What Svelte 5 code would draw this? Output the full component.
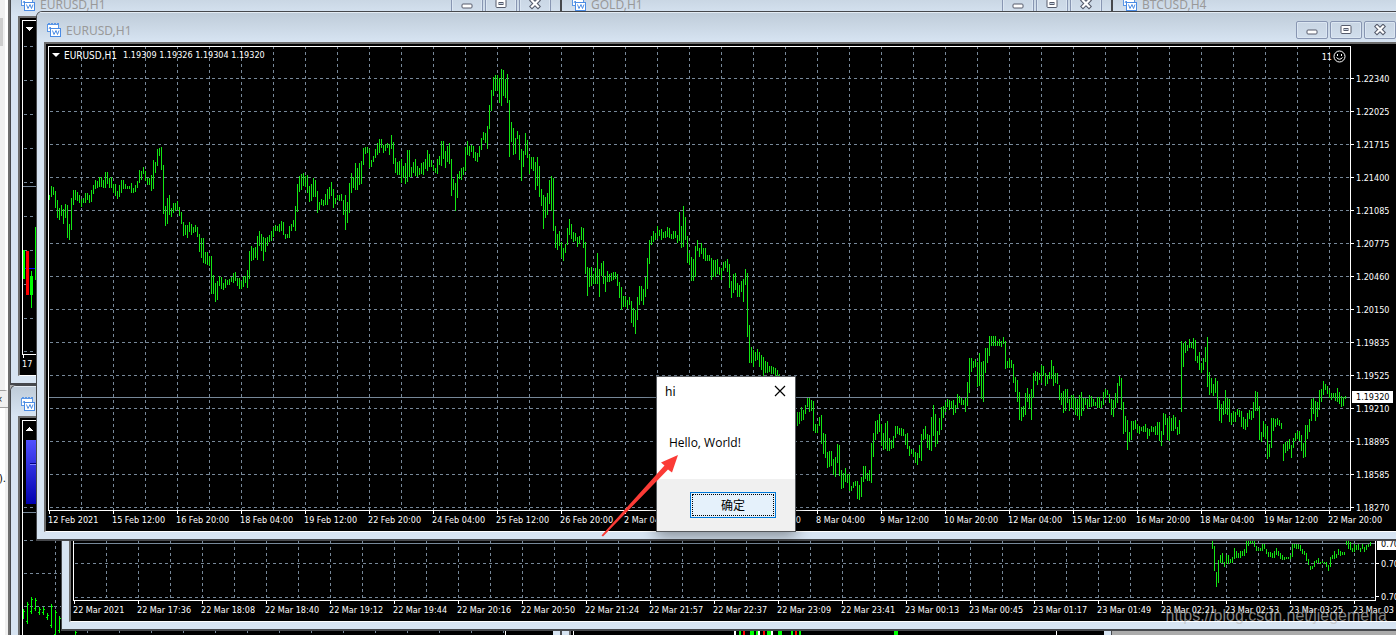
<script lang="ts">
  type Bar = [number, number];

  // high-low pairs, one bar every 2px, measured down from the desktop's top
  const eurusd = `
    195-200 186-197 187-195 191-208 200-218 208-220 205-216 209-224 204-218 205-238 224-240 198-230 190-205 190-200 192-201 195-203
    199-207 198-203 193-203 193-200 195-203 190-202 185-194 180-189 181-188 177-187 177-187 180-188 172-188 172-184 178-188 177-188
    184-193 184-196 191-199 185-197 180-193 180-189 184-189 186-189 186-189 183-193 188-193 185-192 181-188 170-183 171-180 167-174
    171-181 178-185 178-185 175-191 160-189 162-173 149-166 148-156 147-170 165-214 206-226 198-224 195-215 208-217 203-213 203-211
    201-210 207-216 212-224 222-236 225-235 225-238 222-232 224-235 227-233 225-232 227-237 234-252 238-258 238-263 252-264 252-265
    256-266 256-294 275-294 283-302 281-300 276-286 277-289 283-290 279-288 280-285 279-285 277-282 273-283 272-281 278-286 278-289
    281-289 276-287 276-283 270-288 251-279 246-261 248-260 247-258 236-260 231-246 234-251 237-261 238-252 237-246 235-242 231-241
    227-237 225-231 226-231 224-232 221-231 222-235 234-239 234-238 226-238 224-231 220-227 206-231 184-212 176-192 174-190 173-186
    176-187 175-193 186-202 184-201 178-197 180-197 191-213 202-210 199-205 200-206 194-205 189-205 187-199 182-196 189-208 198-204
    195-200 195-201 194-201 200-215 195-230 202-223 183-213 173-193 177-188 163-190 168-190 163-185 161-184 148-165 147-154 147-153
    149-168 160-167 156-162 149-158 143-155 139-153 139-148 145-153 144-151 143-148 144-155 135-149 142-164 158-173 162-175 161-175
    159-183 166-178 163-184 150-182 150-177 167-177 162-173 159-176 166-177 168-175 163-174 162-175 159-169 150-171 154-167 160-167
    165-171 168-173 159-174 156-165 141-166 141-159 151-168 146-162 143-164 159-196 179-190 183-211 174-198 171-179 168-180 167-175
    147-171 141-155 146-156 145-152 146-158 152-161 153-162 146-157 138-150 132-140 133-143 126-149 105-129 90-111 77-96 75-91
    75-91 78-103 69-106 70-96 79-98 74-103 100-157 122-142 128-155 138-154 131-139 135-160 149-181 151-167 133-155 140-158
    155-174 157-169 157-171 162-190 157-186 166-197 189-206 195-229 197-218 193-215 180-204 176-211 178-231 226-248 234-250 231-246
    242-258 248-261 244-253 228-245 219-235 224-239 232-242 233-241 237-247 236-244 227-240 228-248 242-274 267-296 268-287 267-286
    274-284 268-284 253-284 269-297 263-276 261-284 276-292 271-282 274-282 273-281 272-280 272-279 274-286 282-298 287-310 296-307
    296-307 300-309 297-305 301-323 308-327 310-334 297-320 286-305 286-301 289-305 277-297 258-289 240-264 236-245 231-242 233-240
    226-239 230-236 229-240 232-238 231-238 227-237 228-238 234-239 231-239 231-238 235-243 212-241 226-248 206-247 217-240 236-263
    253-265 257-281 259-281 246-277 240-251 248-257 243-254 248-259 248-261 255-261 255-261 258-280 260-277 260-277 259-274 267-275
    268-280 262-271 261-268 259-272 264-288 281-298 274-293 273-290 283-297 285-297 281-292 279-302 269-285 273-337 325-363 347-363
    350-367 352-361 349-360 352-367 355-370 357-376 361-373 362-373 366-372 366-374 367-374 368-376 370-380 374-384 378-390 380-394
    384-398 388-402 392-408 398-412 404-418 410-426 412-426 412-424 407-421 410-420 405-414 398-407 398-412 400-411 401-431 424-433
    424-433 417-426 415-444 433-454 434-458 452-468 451-467 451-466 459-475 457-477 444-463 445-476 470-489 473-488 468-482 474-483
    474-491 486-491 482-488 481-486 481-499 485-500 477-497 466-482 466-479 473-481 470-481 443-483 433-457 421-440 420-434 414-432
    424-446 433-450 423-449 421-451 438-451 440-449 436-448 426-438 426-434 428-435 428-436 429-436 434-445 433-449 446-456 449-454
    450-457 452-463 453-465 445-458 434-461 429-440 426-439 434-448 435-450 417-451 405-436 414-447 431-444 418-435 407-430 406-418
    402-412 399-407 400-410 401-409 400-415 405-413 394-408 396-403 398-405 400-405 398-412 382-406 358-393 358-372 361-368 359-367
    362-387 353-386 362-399 361-402 348-373 348-363 336-356 336-346 336-346 336-346 341-346 339-346 341-347 337-344 341-369 361-368
    358-368 360-368 364-383 377-392 380-402 392-420 407-421 406-417 393-415 388-402 394-409 389-420 373-398 371-381 372-385 373-380
    365-383 366-376 373-386 375-384 372-379 360-379 366-386 373-383 373-384 385-400 393-405 391-413 389-411 389-403 399-411 395-408
    395-410 398-415 399-416 395-420 392-416 398-411 398-405 399-409 395-407 396-407 399-406 402-406 397-408 397-408 401-408 392-405
    389-398 390-395 394-403 399-415 400-417 393-408 383-403 376-386 378-410 402-434 416-432 420-450 432-442 421-440 421-430 420-429
    424-433 426-434 427-431 426-432 424-432 428-439 429-436 426-432 427-432 426-435 422-435 422-441 431-446 413-435 414-425 418-440
    416-441 418-431 415-431 417-429 427-435 420-434 341-412 343-367 341-353 345-351 339-348 342-348 338-349 340-361 356-363 352-370
    363-373 358-370 347-362 337-387 372-395 378-393 384-396 378-393 381-409 400-421 404-423 401-415 390-414 398-415 399-422 413-425
    411-422 412-422 409-415 410-417 411-427 417-429 419-430 413-427 410-419 411-420 402-418 391-411 392-411 406-440 432-442 421-437
    424-439 426-459 444-457 418-448 418-431 419-427 418-425 420-426 423-429 444-461 442-453 441-451 439-449 445-458 438-448 433-441
    431-439 431-441 435-451 443-458 425-457 425-439 419-432 399-421 398-414 401-421 402-417 390-410 389-402 381-395 384-390 386-394
    390-398 393-400 393-398 393-401 388-402 392-404 396-407 397-406 396-399`;

  const minute = `
    541-549 546-571 572-587 560-583 555-563 553-563 562-567 555-564 555-564 559-563 557-563 548-559 551-558 553-558 551-558 551-556
    549-556 541-553 541-546 541-544 541-543 541-547 546-551 548-551 548-551 544-551 544-549 549-554 552-557 552-557 553-558 551-558
    548-555 551-556 553-559 555-560 557-560 557-559 557-559 555-559 544-557 544-548 544-549 544-549 545-551 549-554 551-555 553-561
    559-565 566-570 566-569 561-567 560-563 558-563 562-564 561-563 562-564 562-567 565-571 557-567 555-559 551-559 554-558 549-555
    551-556 552-555 552-555 541-545 541-549 542-550 548-552 544-552 545-550 544-550 548-552 544-549 547-552 545-550 544-547 542-546`;

  const dailyBars = [
    [0, 609, 619], [4, 602, 624], [8, 597, 614], [12, 598, 611], [16, 607, 615], [20, 607, 615],
    [24, 613, 620], [28, 604, 628], [32, 610, 637], [36, 616, 633], [52, 630, 640]
  ];

  const prices = [
    '1.22340', '1.22025', '1.21715', '1.21400', '1.21085', '1.20775', '1.20460',
    '1.20150', '1.19835', '1.19525', '1.19210', '1.18895', '1.18585', '1.18270'
  ];

  const hours = [
    '12 Feb 2021', '15 Feb 12:00', '16 Feb 20:00', '18 Feb 04:00', '19 Feb 12:00', '22 Feb 20:00', '24 Feb 04:00',
    '25 Feb 12:00', '26 Feb 20:00', '2 Mar 04:00', '3 Mar 12:00', '4 Mar 20:00', '8 Mar 04:00', '9 Mar 12:00',
    '10 Mar 20:00', '12 Mar 04:00', '15 Mar 12:00', '16 Mar 20:00', '18 Mar 04:00', '19 Mar 12:00', '22 Mar 20:00'
  ];

  const minutes = [
    '22 Mar 2021', '22 Mar 17:36', '22 Mar 18:08', '22 Mar 18:40', '22 Mar 19:12', '22 Mar 19:44', '22 Mar 20:16',
    '22 Mar 20:50', '22 Mar 21:24', '22 Mar 21:57', '22 Mar 22:37', '22 Mar 23:09', '22 Mar 23:41', '23 Mar 00:13',
    '23 Mar 00:45', '23 Mar 01:17', '23 Mar 01:49', '23 Mar 02:21', '23 Mar 02:53', '23 Mar 03:25', '23 Mar 03'
  ];

  const strip = [
    [160, 'w'], [165, 'g'], [169, 'r'], [176, 'g'], [178, 'g'], [182, 'g'], [184, 'w'], [189, 'r'],
    [193, 'g'], [195, 'g'], [197, 'w'], [204, 'g'], [206, 'g'], [217, 'g'], [221, 'r'], [225, 'g'], [320, 'g'], [322, 'g']
  ];
  const stripColors: Record<string, string> = { w: '#ffffff', g: '#00ff00', r: '#ff0000' };

  function parse(text: string): Bar[] {
    return text.trim().split(/\s+/).map((pair) => pair.split('-').map(Number) as Bar);
  }

  function barPath(text: string, left: number, top: number) {
    return parse(text)
      .map(([high, low], i) => `M${left + i * 2 + 0.5} ${high - top}V${low - top}`)
      .join('');
  }

  function steps(from: number, step: number, count: number) {
    return Array.from({ length: count }, (_, i) => from + i * step);
  }

  let open = $state(true);
</script>

{#snippet titlebar(title: string)}
  <header class="titlebar">
    <svg class="chart-icon" width="14" height="14" viewBox="0 0 14 14">
      <rect x="0.5" y="1.5" width="11" height="7" fill="#fff" stroke="#5a96e6" />
      <path d="M0 1.5h12" stroke="#5a96e6" />
      <path d="M1 .5h2M4 .5h2M7 .5h2M10 .5h2" stroke="#5a96e6" />
      <path d="M2 6l1-2 1 1" fill="none" stroke="#5a96e6" />
      <rect x="3.5" y="5.5" width="10" height="8" fill="#fff" stroke="#4a8be4" />
      <path d="M3 5.5h11" stroke="#4a8be4" stroke-width="1" />
      <path d="M5.5 7.5l1.500 4 2-4 1.500 4 1.500-4" fill="none" stroke="#4a8be4" />
    </svg>
    <span class="title">{title}</span>
    <div class="controls">
      <button aria-label="Minimize">
        <svg width="12" height="12"><rect x="1" y="6" width="10" height="4" rx="1" fill="#fff" stroke="#565b6b" /></svg>
      </button>
      <button aria-label="Maximize">
        <svg width="12" height="12">
          <rect x="1" y="1.5" width="10" height="8" rx="1" fill="#fff" stroke="#565b6b" />
          <rect x="4" y="4.5" width="4" height="2" fill="#c3d0e0" stroke="#565b6b" />
        </svg>
      </button>
      <button aria-label="Close">
        <svg width="12" height="12">
          <path d="M3 2.5l6 6M9 2.5l-6 6" stroke="#565b6b" stroke-width="4.4" stroke-linecap="square" />
          <path d="M3 2.5l6 6M9 2.5l-6 6" stroke="#fff" stroke-width="2.2" stroke-linecap="square" />
        </svg>
      </button>
    </div>
  </header>
{/snippet}

{#snippet grid(rows: number[], columns: number, level: number)}
  <g class="grid">
    {#each rows as y}
      <line x1="1" x2="100%" y1={y + 0.5} y2={y + 0.5} />
    {/each}
    {#each steps(32, 32, columns) as x}
      <line x1={x + 0.5} x2={x + 0.5} y1="-1" y2="100%" />
    {/each}
  </g>
  <line class="level" x1="0" x2="100%" y1={level + 0.5} y2={level + 0.5} />
{/snippet}

<main class="desktop">
  <aside class="dock">
    <div class="dock-top"><span class="thumb"></span></div>
    <div class="dock-head">×</div>
    <div class="dock-list">).</div>
  </aside>

  <section class="window back-first">
    {@render titlebar('EURUSD,H1')}
    <div class="chart">
      <div class="plot">
        <svg class="canvas">
          {@render grid([25, 59, 93, 127, 161, 195, 229, 263, 297, 330], 0, 165)}
          <path d="M3 6h7l-3.5 4z" fill="#fff" />
          <path d="M2 247h12" stroke="#0000ff" />
          <path d="M1 229v29M12.5 206v53" stroke="#00ff00" stroke-width="2" />
          <rect x="3" y="230" width="3" height="44" fill="#ff0000" />
          <rect x="7" y="255" width="3" height="19" fill="#00ff00" />
          <path d="M8.5 250v37" stroke="#00ff00" />
        </svg>
      </div>
      <div class="prices"></div>
      <div class="times"><span>17</span></div>
    </div>
  </section>

  <section class="window back-second">{@render titlebar('GOLD,H1')}</section>
  <section class="window back-third">{@render titlebar('BTCUSD,H4')}</section>

  <section class="window low-first">
    {@render titlebar('')}
    <div class="chart">
      <div class="plot">
        <svg class="canvas">
          <defs>
            <linearGradient id="panel" x2="0" y2="1">
              <stop offset="0" stop-color="#5050ff" />
              <stop offset="1" stop-color="#0000b0" />
            </linearGradient>
          </defs>
          {@render grid([86, 119, 152, 185], 15, 91)}
          <rect width="60" height="84" />
          <path d="M3 10h7l-3.5-4z" fill="#fff" />
          <rect x="3" y="19" width="60" height="64" fill="url(#panel)" />
          <path d="M7 42.5h50" stroke="#000080" />
          <path d="M7 43.5h50" stroke="#8080ff" />
          <g stroke="#00ff00">
            {#each dailyBars as [x, high, low]}
              <path d="M{x + 0.5} {high - 421}V{low - 421}M{x - 1} {low - 423.5}h1M{x + 1} {high - 418.5}h1" />
            {/each}
          </g>
        </svg>
      </div>
      <div class="prices"></div>
      <div class="times"></div>
    </div>
  </section>

  <section class="window low-second">
    {@render titlebar('')}
    <div class="chart">
      <div class="plot">
        <svg class="canvas">
          {#each strip as [x, color]}
            <path d="M{Number(x) + 0.5} 60V300" stroke={stripColors[color]} stroke-width="2" />
          {/each}
        </svg>
      </div>
      <div class="prices"></div>
      <div class="times"></div>
    </div>
  </section>

  <section class="window minute">
    {@render titlebar('')}
    <div class="chart">
      <div class="plot">
        <svg class="canvas">
          {@render grid([27, 61], 40, 7)}
          <path class="bars" d={barPath(minute, 1138, 536)} />
        </svg>
      </div>
      <div class="prices">
        <span class="price">0.70</span>
        <span class="price">0.70</span>
        <strong class="current">0.70</strong>
      </div>
      <div class="times">
        {#each minutes as time}<span>{time}</span>{/each}
      </div>
    </div>
  </section>

  <section class="window front">
    {@render titlebar('EURUSD,H1')}
    <div class="chart">
      <div class="plot">
        <svg class="canvas">
          {@render grid(steps(31, 33, 14), 40, 350)}
          <path class="bars" d={barPath(eurusd, 0, 47)} />
        </svg>
        <div class="quote">
          <svg width="8" height="5"><path d="M0 0h8l-4 4z" fill="#fff" /></svg>
          <span class="symbol">EURUSD,H1</span>
          <span>1.19309 1.19326 1.19304 1.19320</span>
        </div>
        <div class="expert">
          <span>11</span>
          <svg width="13" height="13" fill="none" stroke="#fff">
            <circle cx="6.5" cy="6.5" r="5.5" />
            <path d="M4.5 4v2M8.5 4v2M3.5 7.5q3 3.5 6 0" />
          </svg>
        </div>
      </div>
      <div class="prices">
        {#each prices as price}<span class="price">{price}</span>{/each}
        <strong class="current">1.19320</strong>
      </div>
      <div class="times">
        {#each hours as time}<span>{time}</span>{/each}
      </div>
    </div>
  </section>

  {#if open}
    <div class="dialog" role="dialog" aria-labelledby="dialog-title">
      <div class="dialog-head">
        <span id="dialog-title">hi</span>
        <button class="dismiss" aria-label="Close" onclick={() => (open = false)}>
          <svg width="12" height="12"><path d="M1 1l10 10M11 1L1 11" stroke="#000" stroke-width="1.2" /></svg>
        </button>
      </div>
      <p>Hello, World!</p>
      <footer>
        <button class="ok" onclick={() => (open = false)}><span>确定</span></button>
      </footer>
    </div>
  {/if}

  <svg class="arrow" width="78" height="84" viewBox="0 0 78 84">
    <path d="M77 1L60 8.5l3.5 3L0.5 81.5l1.5 1L67 15.5l4 3z" fill="#fb3b36" />
  </svg>

  <div class="watermark">https://blog.csdn.net/jiegemena</div>
</main>

<style>
  :global(body) {
    margin: 0;
  }

  .desktop {
    position: relative;
    height: 100vh;
    overflow: hidden;
    background: #ababab;
    font-family: 'DejaVu Sans Condensed', 'DejaVu Sans', sans-serif;
    font-size: 9px;
    color: #fff;
  }

  .dock {
    display: flex;
    flex-direction: column;
    box-sizing: border-box;
    width: 10px;
    height: 100%;
    border-right: 2px solid #6e6e6e;
    background: #f0f0f0;
    color: #000;
    overflow: hidden;
  }

  .dock-top {
    height: 391px;
    padding-top: 18px;
    box-sizing: border-box;
    border-right: 3px solid #fff;
    border-bottom: 1px solid #a0a0a0;
  }

  .thumb {
    display: block;
    width: 3px;
    height: 28px;
    background: #cdcdcd;
  }

  .dock-head {
    height: 16px;
    line-height: 16px;
    text-indent: -4px;
    border-bottom: 1px solid #a0a0a0;
  }

  .dock-list {
    flex: 1;
    padding-top: 64px;
    border-right: 3px solid #f0f0f0;
    background: #fff;
    font-size: 11px;
    text-indent: -1px;
  }

  .window {
    position: absolute;
    display: flex;
    flex-direction: column;
    box-sizing: border-box;
    border: 1px solid #46484c;
    border-bottom-width: 2px;
    border-radius: 6px 6px 0 0;
    background: #d7e4f2;
    overflow: hidden;
  }

  .back-first {
    left: 10px;
    top: -15px;
    width: 551px;
    height: 400px;
  }

  .back-second {
    left: 561px;
    top: -15px;
    width: 551px;
    height: 400px;
  }

  .back-third {
    left: 1112px;
    top: -15px;
    width: 551px;
    height: 400px;
  }

  .low-first {
    left: 10px;
    top: 385px;
    width: 551px;
    height: 400px;
  }

  .low-second {
    left: 561px;
    top: 385px;
    width: 551px;
    height: 400px;
  }

  .minute {
    left: 61px;
    right: -35px;
    top: 500px;
    height: 131px;
  }

  .front {
    left: 36px;
    right: -10px;
    top: 11px;
    height: 530px;
  }

  .titlebar {
    display: flex;
    align-items: center;
    flex: none;
    height: 30px;
    box-sizing: border-box;
    padding: 5px 9px 0 10px;
    border-top: 1px solid #e4ecf4;
    background: linear-gradient(#bfccd9, #d7e4f2);
  }

  .title {
    flex: 1;
    padding-left: 5px;
    font: 12px 'Noto Sans', 'Open Sans', sans-serif;
    color: #999;
  }

  .controls {
    display: flex;
    gap: 2px;
  }

  .controls button {
    display: flex;
    align-items: center;
    justify-content: center;
    width: 32px;
    height: 18px;
    padding: 0;
    border: 1px solid #8896b2;
    border-radius: 2px;
    background: linear-gradient(#c8d5e3, #d1deec);
    box-shadow: inset 0 0 0 1px #dbe6f2;
  }

  .chart {
    flex: 1;
    display: grid;
    grid-template-columns: 1fr 47px;
    grid-template-rows: 1fr 20px;
    min-height: 0;
    margin: 0 7px 7px;
    padding: 2px 0 0 2px;
    border: solid #a0a0a0;
    border-width: 2px 0 1px 2px;
    border-top-color: #6c6c6c;
    border-left-color: #6c6c6c;
    border-bottom-color: #fff;
    background: #000;
  }

  .plot {
    position: relative;
    min-height: 0;
    border: 1px solid #fff;
  }

  .canvas {
    display: block;
    position: absolute;
    width: 100%;
    height: 100%;
    shape-rendering: crispEdges;
  }

  .grid {
    stroke: #778899;
    stroke-dasharray: 3 3;
  }

  .level {
    stroke: #778899;
  }

  .bars {
    fill: none;
    stroke: #14e614;
  }

  .quote {
    position: relative;
    display: flex;
    align-items: center;
    height: 16px;
    padding-left: 3px;
  }

  .symbol {
    padding: 0 6px 0 4px;
    font-size: 10px;
  }

  .expert {
    position: absolute;
    top: 3px;
    right: 4px;
    display: flex;
    align-items: center;
    gap: 1px;
  }

  .prices {
    position: relative;
    height: 0;
    padding-top: 16px;
  }

  .price {
    display: flex;
    align-items: center;
    height: 33px;
  }

  .price::before {
    content: '';
    width: 3px;
    height: 1px;
    margin-right: 2px;
    background: #fff;
  }

  .current {
    position: absolute;
    left: 1px;
    top: 345px;
    width: 41px;
    height: 12px;
    box-sizing: border-box;
    padding-left: 4px;
    line-height: 12px;
    font-weight: normal;
    background: #fff;
    color: #000;
  }

  .minute .prices {
    padding-top: 12px;
  }

  .minute .current {
    top: 3px;
  }

  .times {
    grid-column: 1 / -1;
    display: flex;
    overflow: hidden;
  }

  .times span {
    flex: none;
    width: 64px;
    line-height: 18px;
    white-space: nowrap;
  }

  .times span::before {
    content: '';
    display: block;
    width: 1px;
    height: 3px;
    margin: 0 0 -3px 1px;
    background: #fff;
  }

  .dialog {
    position: absolute;
    left: 656px;
    top: 376px;
    width: 138px;
    border: 1px solid #55585c;
    background: #fff;
    box-shadow: 0 4px 14px rgba(0, 0, 0, 0.4);
    color: #000;
    font: 12px 'Noto Sans', 'Noto Sans CJK SC', sans-serif;
  }

  .dialog-head {
    display: flex;
    align-items: center;
    justify-content: space-between;
    height: 28px;
    padding: 0 9px 0 8px;
  }

  .dismiss {
    display: flex;
    padding: 0;
    border: 0;
    background: none;
  }

  .dialog p {
    margin: 0;
    padding: 29px 12px 27px;
    font: 12px/18px 'Open Sans', 'Noto Sans', sans-serif;
  }

  .dialog footer {
    display: flex;
    justify-content: flex-end;
    padding: 13px 19px;
    background: #f0f0f0;
  }

  .ok {
    width: 86px;
    height: 26px;
    padding: 1px;
    border: 1px solid #0078d7;
    background: #e5f1fb;
    color: #000;
    font: 12px 'Noto Sans CJK SC', sans-serif;
  }

  .ok span {
    display: block;
    line-height: 20px;
    border: 1px dotted #000;
  }

  .arrow {
    position: absolute;
    left: 601px;
    top: 454px;
  }

  .watermark {
    position: absolute;
    right: 9px;
    bottom: 9px;
    font: 16px/20px 'Liberation Sans', sans-serif;
    color: rgba(190, 190, 190, 0.7);
  }
</style>
